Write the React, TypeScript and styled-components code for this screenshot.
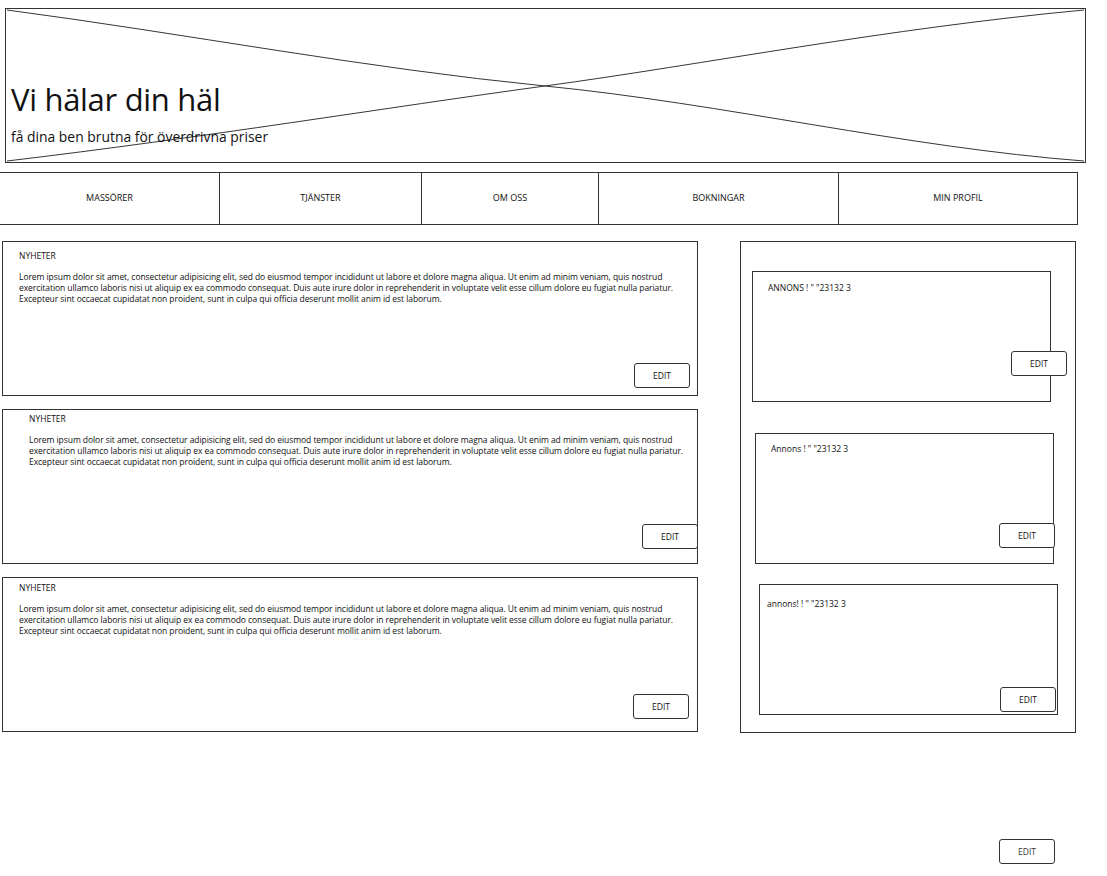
import React from "react";
import styled, { createGlobalStyle } from "styled-components";

const GlobalStyle = createGlobalStyle`
    body {
        margin: 0;
        background: #ffffff;
        font-family: "Open Sans", "Noto Sans", sans-serif;
        color: #111111;
    }
`;

//#region Style Definitions
const Page = styled.div`
    position: relative;
    width: 1107px;
    height: 876px;
    padding-top: 8px;
    box-sizing: border-box;
`;

const Hero = styled.header`
    position: relative;
    margin-left: 5px;
    width: 1081px;
    height: 155px;
    box-sizing: border-box;
    border: 1px solid #333;
    display: flex;
    flex-direction: column;
    justify-content: flex-end;
    padding: 0 0 16px 5px;
`;

const HeroCross = styled.svg`
    position: absolute;
    inset: 0;
    width: 100%;
    height: 100%;
`;

const HeroTitle = styled.h1`
    position: relative;
    margin: 0;
    font-weight: 400;
    font-size: 31px;
    line-height: 38px;
    letter-spacing: -0.3px;
`;

const HeroSub = styled.p`
    position: relative;
    margin: 10px 0 0;
    font-size: 13.9px;
    line-height: 18px;
`;

const Nav = styled.nav`
    margin-top: 9px;
    width: 1078px;
    height: 53px;
    display: grid;
    grid-template-columns: 220px 202px 177px 240px 239px;
    border-top: 1px solid #333;
    border-bottom: 1px solid #333;
    box-sizing: border-box;
`;

const NavTab = styled.div`
    display: flex;
    align-items: center;
    justify-content: center;
    font-size: 9px;
    text-transform: uppercase;
    border-right: 1px solid #333;
    padding-bottom: 2px;
`;

const Main = styled.main`
    margin-top: 16px;
    display: flex;
    align-items: flex-start;
    padding-left: 2px;
    gap: 42px;
`;

const NewsColumn = styled.section`
    width: 696px;
    display: flex;
    flex-direction: column;
    gap: 13px;
`;

const NewsCard = styled.article<{ $indent: number; $top: number; $btnRight: number; $btnBottom: number }>`
    height: 155px;
    box-sizing: border-box;
    border: 1px solid #333;
    display: flex;
    flex-direction: column;
    padding: ${p => p.$top}px 0 ${p => p.$btnBottom}px 16px;

    & > h3 {
        margin: 0 0 9px ${p => p.$indent}px;
        font-size: 8.5px;
        font-weight: 400;
        line-height: 12px;
    }

    & > button {
        margin-top: auto;
        align-self: flex-end;
        margin-right: ${p => p.$btnRight}px;
    }
`;

const NewsText = styled.p<{ $indent: number }>`
    margin: 0 0 0 ${p => p.$indent}px;
    font-size: 8.5px;
    line-height: 11px;
    letter-spacing: -0.06px;

    span {
        display: block;
        white-space: nowrap;
    }
`;

const AdPanel = styled.aside`
    width: 336px;
    height: 492px;
    box-sizing: border-box;
    border: 1px solid #333;
    display: flex;
    flex-direction: column;
    padding-top: 29px;
`;

const AdCard = styled.div<{ $left: number; $gap: number; $textLeft: number; $textTop: number; $btnRight: number; $btnBottom: number; $btnTop?: number }>`
    margin-left: ${p => p.$left}px;
    margin-bottom: ${p => p.$gap}px;
    width: 299px;
    height: 131px;
    box-sizing: border-box;
    border: 1px solid #333;
    display: flex;
    flex-direction: column;
    padding: ${p => p.$textTop}px 0 ${p => p.$btnBottom}px ${p => p.$textLeft}px;

    & > p {
        margin: 0;
        font-size: 8.5px;
        line-height: 12px;
    }

    & > button {
        margin-top: ${p => (p.$btnTop != null ? `${p.$btnTop}px` : "auto")};
        align-self: flex-end;
        margin-right: ${p => p.$btnRight}px;
    }
`;

const EditButton = styled.button<{ $muted?: boolean }>`
    width: 56px;
    height: 25px;
    flex-shrink: 0;
    box-sizing: border-box;
    background: #ffffff;
    border: 1px solid #333;
    border-radius: 3px;
    font-family: "Open Sans", "Noto Sans", sans-serif;
    font-size: 8.5px;
    color: ${p => (p.$muted ? "#333" : "#111")};
    padding: 0;
    cursor: pointer;
`;

const Footer = styled.footer`
    display: flex;
    justify-content: flex-end;
    padding: 106px 52px 0 0;
`;
//#endregion

const navItems = ["Massörer", "Tjänster", "Om oss", "Bokningar", "Min profil"];

const loremLines = [
    "Lorem ipsum dolor sit amet, consectetur adipisicing elit, sed do eiusmod tempor incididunt ut labore et dolore magna aliqua. Ut enim ad minim veniam, quis nostrud",
    "exercitation ullamco laboris nisi ut aliquip ex ea commodo consequat. Duis aute irure dolor in reprehenderit in voluptate velit esse cillum dolore eu fugiat nulla pariatur.",
    "Excepteur sint occaecat cupidatat non proident, sunt in culpa qui officia deserunt mollit anim id est laborum.",
];

const news = [
    { indent: 0, top: 8, btnRight: 7, btnBottom: 7 },
    { indent: 10, top: 3, btnRight: -1, btnBottom: 14 },
    { indent: 0, top: 4, btnRight: 8, btnBottom: 12 },
];

const ads = [
    { text: "ANNONS ! \" \"23132 3", left: 11, gap: 31, textLeft: 15, textTop: 10, btnRight: -17, btnBottom: 0, btnTop: 57 },
    { text: "Annons ! \" \"23132 3", left: 14, gap: 20, textLeft: 15, textTop: 9, btnRight: -2, btnBottom: 15 },
    { text: "annons! ! \" \"23132 3", left: 18, gap: 0, textLeft: 7, textTop: 13, btnRight: 1, btnBottom: 2 },
];

function App() {
    return (
        <Page>
            <GlobalStyle />
            <Hero>
                <HeroCross viewBox="0 0 1081 155" preserveAspectRatio="none">
                    <path d="M1 1 C 180 25, 360 60, 540 78 S 900 140, 1080 154" fill="none" stroke="#333" strokeWidth="1" />
                    <path d="M1 154 C 200 130, 380 100, 540 78 S 880 20, 1080 1" fill="none" stroke="#333" strokeWidth="1" />
                </HeroCross>
                <HeroTitle>Vi hälar din häl</HeroTitle>
                <HeroSub>få dina ben brutna för överdrivna priser</HeroSub>
            </Hero>

            <Nav>
                {navItems.map(item => (
                    <NavTab key={item}>{item}</NavTab>
                ))}
            </Nav>

            <Main>
                <NewsColumn>
                    {news.map((n, i) => (
                        <NewsCard key={i} $indent={n.indent} $top={n.top} $btnRight={n.btnRight} $btnBottom={n.btnBottom}>
                            <h3>NYHETER</h3>
                            <NewsText $indent={n.indent}>
                                {loremLines.map(line => <span key={line}>{line}</span>)}
                            </NewsText>
                            <EditButton>EDIT</EditButton>
                        </NewsCard>
                    ))}
                </NewsColumn>

                <AdPanel>
                    {ads.map(a => (
                        <AdCard
                            key={a.text}
                            $left={a.left}
                            $gap={a.gap}
                            $textLeft={a.textLeft}
                            $textTop={a.textTop}
                            $btnRight={a.btnRight}
                            $btnBottom={a.btnBottom}
                            $btnTop={a.btnTop}
                        >
                            <p>{a.text}</p>
                            <EditButton>EDIT</EditButton>
                        </AdCard>
                    ))}
                </AdPanel>
            </Main>

            <Footer>
                <EditButton $muted>EDIT</EditButton>
            </Footer>
        </Page>
    );
}

export default App;
